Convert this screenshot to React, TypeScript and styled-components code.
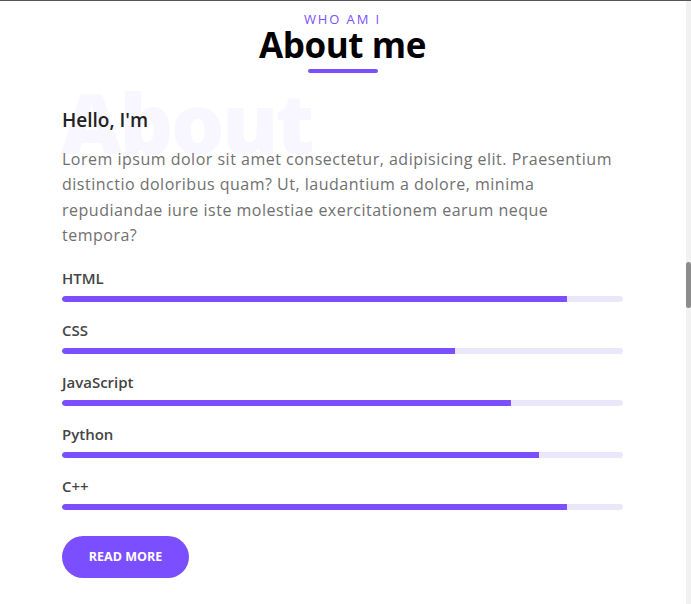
import React from "react";
import styled, { createGlobalStyle } from "styled-components";

const GlobalStyle = createGlobalStyle`
  html, body { margin: 0; padding: 0; background: #ffffff; }
  body { font-family: "Open Sans", "Noto Sans", sans-serif; }
  * { box-sizing: border-box; }
`;

const Page = styled.div`
  border-top: 1px solid #555555;
  padding: 0 68px 0 62px;
  min-height: 604px;
`;

const Section = styled.section`
  width: 561px;
  padding: 9px 0 26px;
`;

const Header = styled.header`
  display: flex;
  flex-direction: column;
  align-items: center;
`;

const Eyebrow = styled.span`
  font-size: 13px;
  line-height: 18px;
  letter-spacing: 1.9px;
  color: #7b4fff;
  text-transform: uppercase;
`;

const Title = styled.h2`
  margin: -3px 0 0;
  font-weight: 700;
  font-size: 35px;
  line-height: 40px;
  letter-spacing: -0.4px;
  color: #000000;
`;

const TitleBar = styled.span`
  width: 70px;
  height: 4px;
  margin-top: 4px;
  border-radius: 4px;
  background: #7b4fff;
`;

const Body = styled.div`
  position: relative;
  margin-top: 34px;
`;

const Watermark = styled.span`
  position: absolute;
  left: -1px;
  top: -27px;
  font-weight: 800;
  font-size: 84px;
  line-height: 1;
  letter-spacing: -2.5px;
  color: #f8f7ff;
  pointer-events: none;
  user-select: none;
`;

const Greeting = styled.h3`
  position: relative;
  margin: 0;
  font-weight: 600;
  font-size: 19px;
  line-height: 26px;
  color: #222222;
`;

const Text = styled.p`
  position: relative;
  margin: 14px 0 0;
  font-size: 16px;
  line-height: 25.4px;
  letter-spacing: 0.5px;
  color: #707070;
`;

const Skills = styled.div`
  display: flex;
  flex-direction: column;
  gap: 17px;
  margin-top: 18px;
`;

const Skill = styled.div`
  display: flex;
  flex-direction: column;
  gap: 6px;
`;

const SkillName = styled.span`
  font-weight: 600;
  font-size: 15px;
  line-height: 23px;
  color: #444444;
`;

const Track = styled.div`
  height: 6px;
  border-radius: 4px;
  background: #ebe7fb;
  overflow: hidden;
`;

const Fill = styled.div`
  height: 100%;
  border-radius: 4px 0 0 4px;
  background: #7b4fff;
`;

const Button = styled.button`
  margin-top: 26px;
  width: 127px;
  height: 42px;
  border: none;
  border-radius: 21px;
  background: #7b4fff;
  color: #ffffff;
  font-family: inherit;
  font-weight: 700;
  font-size: 12.5px;
  text-transform: uppercase;
  cursor: pointer;
`;

const Scrollbar = styled.div`
  position: fixed;
  top: 1px;
  right: 0;
  bottom: 0;
  width: 5px;
  background: #f1f1f1;
`;

const Thumb = styled.div`
  position: absolute;
  left: 0;
  right: 0;
  top: 261px;
  height: 46px;
  border-radius: 3px;
  background: #8c8c8c;
`;

const skills = [
  { name: "HTML", level: 90 },
  { name: "CSS", level: 70 },
  { name: "JavaScript", level: 80 },
  { name: "Python", level: 85 },
  { name: "C++", level: 90 },
];

export default function App() {
  return (
    <>
      <GlobalStyle />
      <Page>
        <Section>
          <Header>
            <Eyebrow>Who am I</Eyebrow>
            <Title>About me</Title>
            <TitleBar />
          </Header>
          <Body>
            <Watermark aria-hidden="true">About</Watermark>
            <Greeting>Hello, I'm</Greeting>
            <Text>
              Lorem ipsum dolor sit amet consectetur, adipisicing elit. Praesentium
              distinctio doloribus quam? Ut, laudantium a dolore, minima repudiandae
              iure iste molestiae exercitationem earum neque tempora?
            </Text>
            <Skills>
              {skills.map((s) => (
                <Skill key={s.name}>
                  <SkillName>{s.name}</SkillName>
                  <Track>
                    <Fill style={{ width: `${s.level}%` }} />
                  </Track>
                </Skill>
              ))}
            </Skills>
            <Button>Read More</Button>
          </Body>
        </Section>
        <Scrollbar>
          <Thumb />
        </Scrollbar>
      </Page>
    </>
  );
}
